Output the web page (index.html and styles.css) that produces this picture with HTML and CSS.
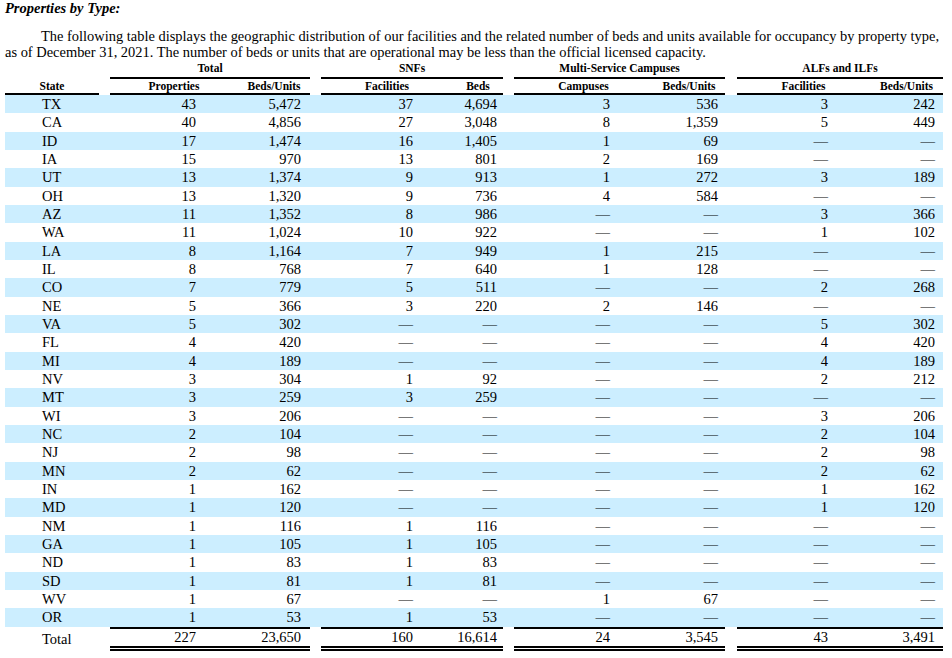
FILE: index.html
```html
<!DOCTYPE html>
<html>
<head>
<meta charset="utf-8">
<link rel="stylesheet" href="styles.css">
</head>
<body>
<div class="page">
<h1 class="title">Properties by Type:</h1>
<p class="intro">The following table displays the geographic distribution of our facilities and the related number of beds and units available for occupancy by property type, as of December 31, 2021. The number of beds or units that are operational may be less than the official licensed capacity.</p>
<table class="dist">
<colgroup>
<col class="c-state"><col class="c-gap">
<col class="c-prop"><col class="c-bu">
<col class="c-gap">
<col class="c-sfac"><col class="c-sbeds">
<col class="c-gap">
<col class="c-camp"><col class="c-mbu">
<col class="c-gap2">
<col class="c-afac"><col class="c-abu">
</colgroup>
<thead>
<tr class="groups">
<th></th><th></th>
<th colspan="2" class="grp">Total</th>
<th></th>
<th colspan="2" class="grp">SNFs</th>
<th></th>
<th colspan="2" class="grp">Multi-Service Campuses</th>
<th></th>
<th colspan="2" class="grp">ALFs and ILFs</th>
</tr>
<tr class="subs">
<th class="sub">State</th><th></th>
<th class="sub">Properties</th><th class="sub">Beds/Units</th>
<th></th>
<th class="sub">Facilities</th><th class="sub">Beds</th>
<th></th>
<th class="sub">Campuses</th><th class="sub">Beds/Units</th>
<th></th>
<th class="sub">Facilities</th><th class="sub">Beds/Units</th>
</tr>
</thead>
<tbody id="rows"></tbody>
<tfoot>
<tr class="total">
<td class="st">Total</td><td></td>
<td class="n p1 tl">227</td><td class="n p2 tl">23,650</td><td></td>
<td class="n p3 tl">160</td><td class="n p4 tl">16,614</td><td></td>
<td class="n p5 tl">24</td><td class="n p6 tl">3,545</td><td></td>
<td class="n p7 tl">43</td><td class="n p8 tl">3,491</td>
</tr>
</tfoot>
</table>
</div>
<script src="app.js"></script>
</body>
</html>
```
FILE: app.js
```js
const D = "\u2014";
const data = [
["TX","43","5,472","37","4,694","3","536","3","242"],
["CA","40","4,856","27","3,048","8","1,359","5","449"],
["ID","17","1,474","16","1,405","1","69",D,D],
["IA","15","970","13","801","2","169",D,D],
["UT","13","1,374","9","913","1","272","3","189"],
["OH","13","1,320","9","736","4","584",D,D],
["AZ","11","1,352","8","986",D,D,"3","366"],
["WA","11","1,024","10","922",D,D,"1","102"],
["LA","8","1,164","7","949","1","215",D,D],
["IL","8","768","7","640","1","128",D,D],
["CO","7","779","5","511",D,D,"2","268"],
["NE","5","366","3","220","2","146",D,D],
["VA","5","302",D,D,D,D,"5","302"],
["FL","4","420",D,D,D,D,"4","420"],
["MI","4","189",D,D,D,D,"4","189"],
["NV","3","304","1","92",D,D,"2","212"],
["MT","3","259","3","259",D,D,D,D],
["WI","3","206",D,D,D,D,"3","206"],
["NC","2","104",D,D,D,D,"2","104"],
["NJ","2","98",D,D,D,D,"2","98"],
["MN","2","62",D,D,D,D,"2","62"],
["IN","1","162",D,D,D,D,"1","162"],
["MD","1","120",D,D,D,D,"1","120"],
["NM","1","116","1","116",D,D,D,D],
["GA","1","105","1","105",D,D,D,D],
["ND","1","83","1","83",D,D,D,D],
["SD","1","81","1","81",D,D,D,D],
["WV","1","67",D,D,"1","67",D,D],
["OR","1","53","1","53",D,D,D,D]
];
const tb = document.getElementById("rows");
data.forEach((r, i) => {
  const tr = document.createElement("tr");
  tr.className = i % 2 === 0 ? "shade" : "plain";
  let html = '<td class="st">' + r[0] + '</td><td></td>';
  const gapsAfter = {2: true, 4: true, 6: true};
  for (let k = 1; k <= 8; k++) {
    html += '<td class="n p' + k + '">' + r[k] + '</td>';
    if (gapsAfter[k]) html += '<td></td>';
  }
  tr.innerHTML = html;
  tb.appendChild(tr);
});
```
FILE: styles.css
```css
html, body {
  margin: 0;
  padding: 0;
  background: #ffffff;
}
.page {
  padding: 0 9px 0 5px;
  font-family: "Liberation Serif", "Times New Roman", serif;
  color: #000;
}
.title {
  margin: 0;
  font-size: 14.5px;
  line-height: 17px;
  font-weight: bold;
  font-style: italic;
}
.intro {
  margin: 11px 0 1px 0;
  font-size: 14.45px;
  line-height: 16px;
  text-indent: 36px;
}
.dist {
  border-collapse: separate;
  border-spacing: 0;
  table-layout: fixed;
  width: 938px;
  font-size: 14.5px;
}
.c-state { width: 94px; }
.c-gap { width: 11px; }
.c-gap2 { width: 12px; }
.c-prop { width: 128px; }
.c-bu { width: 72px; }
.c-sfac { width: 132px; }
.c-sbeds { width: 50px; }
.c-camp { width: 139px; }
.c-mbu { width: 72px; }
.c-afac { width: 133px; }
.c-abu { width: 73px; }
.dist th {
  padding: 0;
  font-size: 11.5px;
  font-weight: bold;
  text-align: center;
  line-height: 14px;
}
.groups th {
  height: 16px;
  vertical-align: bottom;
  padding-bottom: 2px;
  box-sizing: border-box;
}
.groups th.grp {
  border-bottom: 2px solid #000;
}
.subs th {
  height: 14px;
  vertical-align: middle;
}
.subs th.sub {
  border-bottom: 2px solid #000;
}
.dist td {
  padding: 0;
  height: 18.34px;
  line-height: 16px;
  white-space: nowrap;
}
.shade td { background: #cceeff; }
.st { padding-left: 37px !important; text-align: left; }
.n { text-align: right; }
.p1 { padding-right: 42px !important; }
.p2 { padding-right: 9px !important; }
.p3 { padding-right: 40px !important; }
.p4 { padding-right: 6px !important; }
.p5 { padding-right: 43px !important; }
.p6 { padding-right: 7px !important; }
.p7 { padding-right: 42px !important; }
.p8 { padding-right: 8px !important; }
.total td {
  height: 17px;
}
.total td.tl {
  border-top: 2px solid #000;
  border-bottom: 5px double #000;
}
```
